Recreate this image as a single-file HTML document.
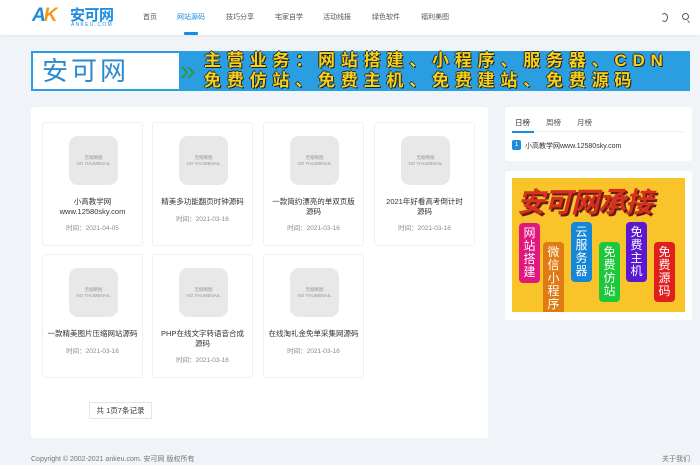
<!DOCTYPE html>
<html><head><meta charset="utf-8"><style>
*{margin:0;padding:0;box-sizing:border-box}
body{width:700px;height:465px;background:#f0f3f7;font-family:"Liberation Sans","Noto Sans CJK SC",sans-serif;position:relative;overflow:hidden;color:#333}
.a{position:absolute}
.hdr{left:0;top:0;width:700px;height:35px;background:#fff;box-shadow:0 1px 3px rgba(0,0,0,.06)}
.nav{top:12px;font-size:7px;color:#555}
.card{background:#fff;border:1px solid #eef0f3;border-radius:3px;width:101px;height:124px}
.ph{position:absolute;left:26px;top:13px;width:49px;height:49px;background:#e8e8e8;border-radius:9px;text-align:center;font-size:4.5px;color:#999;padding-top:19px;line-height:6px}
.t{position:absolute;left:8px;right:8px;top:74px;text-align:center;font-size:7.5px;line-height:10px;color:#333}
.d{position:absolute;left:0;right:0;text-align:center;font-size:6.5px;color:#888}
.vt{position:absolute;width:21px;border-radius:4px;color:#fff;font-size:12px;line-height:13px;text-align:center;padding:4px 0}
</style></head><body>
<div class="a hdr"></div>
<div class="a" style="left:32px;top:5px;font-size:19px;font-weight:bold;font-style:italic;color:#1b8be0;letter-spacing:-2px">A<span style="color:#f39a1d">K</span></div>
<div class="a" style="left:70px;top:4px;font-size:15px;font-weight:bold;color:#1b8be0;letter-spacing:-0.5px">安可网</div>
<div class="a" style="left:71px;top:22px;font-size:5px;color:#1b8be0;letter-spacing:1.3px">ANKEU.COM</div>
<div class="a nav" style="left:143px">首页</div>
<div class="a nav" style="left:177px;color:#1b8be0">网站源码</div>
<div class="a" style="left:184px;top:32px;width:14px;height:3px;background:#1b8be0;border-radius:1px"></div>
<div class="a nav" style="left:226px">技巧分享</div>
<div class="a nav" style="left:275px">宅家自学</div>
<div class="a nav" style="left:323px">活动线报</div>
<div class="a nav" style="left:372px">绿色软件</div>
<div class="a nav" style="left:421px">福利美图</div>
<div class="a" style="left:661px;top:13px;width:7px;height:9px;border:1px solid #555;border-radius:50%;border-left-color:transparent"></div>
<div class="a" style="left:682px;top:13px;width:7px;height:7px;border:1px solid #555;border-radius:50%"></div>
<div class="a" style="left:688px;top:20px;width:1px;height:3px;background:#555;transform:rotate(-45deg)"></div>

<div class="a" style="left:31px;top:51px;width:659px;height:40px;background:#2a9ee0"></div>
<div class="a" style="left:33px;top:53px;width:146px;height:36px;background:#fff"></div>
<div class="a" style="left:42px;top:53px;font-size:26px;color:#2a8ad0;letter-spacing:3px;line-height:36px">安可网</div>
<div class="a" style="left:180px;top:53px;font-size:28px;line-height:36px;color:#2c9a3a">»</div>
<div class="a" style="left:204px;top:51px;font-size:17px;line-height:20px;color:#f7d21a;font-weight:bold;letter-spacing:5.8px;text-shadow:1px 1px 0 #222,-1px 0 0 #222,0 -1px 0 #222;white-space:nowrap">主营业务：网站搭建、小程序、服务器、CDN<br>免费仿站、免费主机、免费建站、免费源码</div>

<div class="a" style="left:31px;top:107px;width:457px;height:331px;background:#fff;border-radius:3px"></div>
<div class="a card" style="left:42px;top:122px"><div class="ph">无缩略图<br>NO THUMBNAIL</div><div class="t">小高教学网<br>www.12580sky.com</div><div class="d" style="top:99px">时间：2021-04-05</div></div>
<div class="a card" style="left:152px;top:122px"><div class="ph">无缩略图<br>NO THUMBNAIL</div><div class="t" style="left:2px;right:2px">精美多功能翻页时钟源码</div><div class="d" style="top:90px">时间：2021-03-16</div></div>
<div class="a card" style="left:263px;top:122px"><div class="ph">无缩略图<br>NO THUMBNAIL</div><div class="t">一款简约漂亮的单双页版源码</div><div class="d" style="top:99px">时间：2021-03-16</div></div>
<div class="a card" style="left:374px;top:122px"><div class="ph">无缩略图<br>NO THUMBNAIL</div><div class="t">2021年好看高考倒计时源码</div><div class="d" style="top:99px">时间：2021-03-16</div></div>
<div class="a card" style="left:42px;top:254px"><div class="ph">无缩略图<br>NO THUMBNAIL</div><div class="t" style="left:2px;right:2px">一款精美图片压缩网站源码</div><div class="d" style="top:90px">时间：2021-03-16</div></div>
<div class="a card" style="left:152px;top:254px"><div class="ph">无缩略图<br>NO THUMBNAIL</div><div class="t">PHP在线文字转语音合成源码</div><div class="d" style="top:99px">时间：2021-03-16</div></div>
<div class="a card" style="left:263px;top:254px"><div class="ph">无缩略图<br>NO THUMBNAIL</div><div class="t" style="left:2px;right:2px">在线淘礼金免单采集网源码</div><div class="d" style="top:90px">时间：2021-03-16</div></div>
<div class="a" style="left:89px;top:402px;width:63px;height:17px;border:1px solid #e5e5e5;font-size:7.5px;line-height:15px;text-align:center;color:#333">共 1页7条记录</div>

<div class="a" style="left:505px;top:107px;width:187px;height:54px;background:#fff;border-radius:3px"></div>
<div class="a" style="left:515px;top:117px;font-size:7.5px;color:#333">日榜</div>
<div class="a" style="left:546px;top:117px;font-size:7.5px;color:#555">周榜</div>
<div class="a" style="left:577px;top:117px;font-size:7.5px;color:#555">月榜</div>
<div class="a" style="left:512px;top:131px;width:172px;height:1px;background:#f0f0f0"></div>
<div class="a" style="left:512px;top:131px;width:22px;height:2px;background:#1b8be0"></div>
<div class="a" style="left:512px;top:140px;width:9px;height:10px;background:#1b8be0;border-radius:2px;color:#fff;font-size:6.5px;text-align:center;line-height:10px">1</div>
<div class="a" style="left:525px;top:141px;font-size:7px;color:#333">小高教学网www.12580sky.com</div>

<div class="a" style="left:505px;top:171px;width:187px;height:149px;background:#fff;border-radius:3px"></div>
<div class="a" style="left:512px;top:178px;width:173px;height:134px;background:#f8c42a;overflow:hidden">
<div class="a" style="left:5px;top:3px;font-size:28px;font-weight:bold;font-style:italic;color:#d6301f;letter-spacing:-1px;text-shadow:2px 2px 0 #6a1a10;white-space:nowrap">安可网承接</div>
<div class="vt" style="left:7px;top:45px;background:#e0177e">网站搭建</div>
<div class="vt" style="left:31px;top:64px;background:#e07a12">微信小程序</div>
<div class="vt" style="left:59px;top:44px;background:#1686d8">云服务器</div>
<div class="vt" style="left:87px;top:64px;background:#1ec83c">免费仿站</div>
<div class="vt" style="left:114px;top:44px;background:#5a18d0">免费主机</div>
<div class="vt" style="left:142px;top:64px;background:#e01e1e">免费源码</div>
</div>

<div class="a" style="left:31px;top:454px;font-size:7px;color:#777">Copyright © 2002-2021 ankeu.com. 安可网 版权所有</div>
<div class="a" style="left:662px;top:454px;font-size:7px;color:#777">关于我们</div>
</body></html>
